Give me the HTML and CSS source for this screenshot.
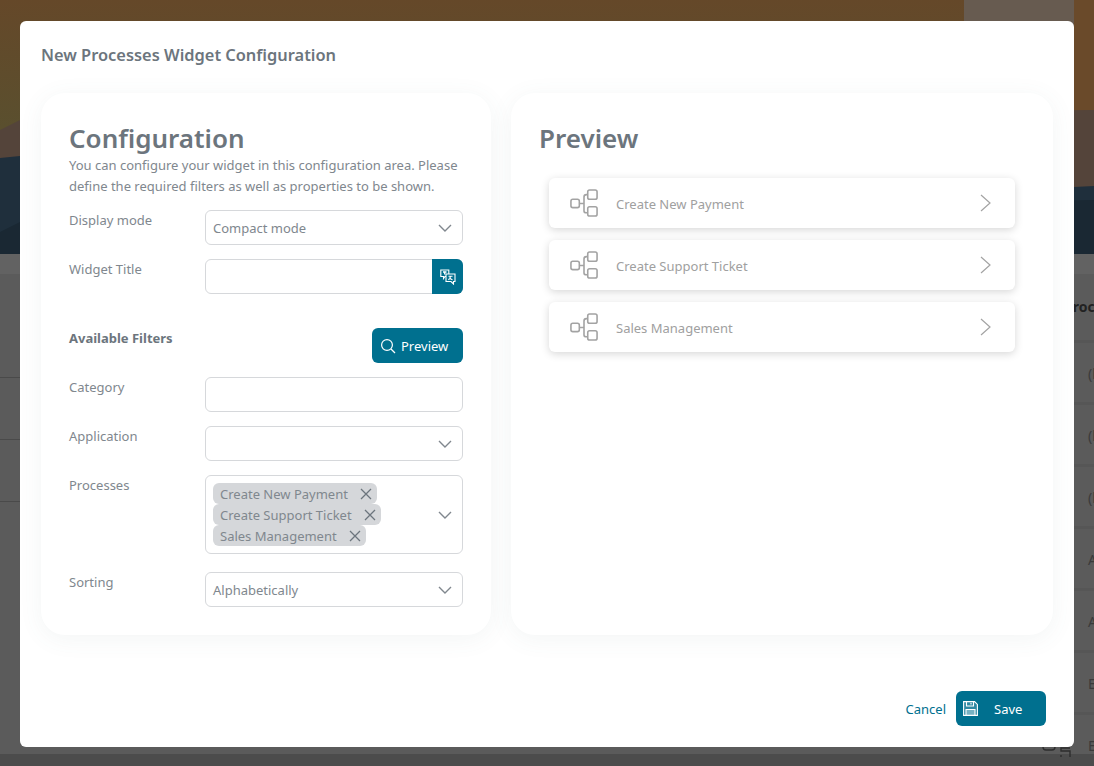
FILE: index.html
```html
<!DOCTYPE html>
<html lang="en">
<head>
    <meta charset="UTF-8">
    <title>New Processes Widget Configuration</title>
    <link rel="stylesheet" href="styles.css">
</head>

<body>
    <!-- Page behind the dialog -->
    <div class="page">
        <div class="hero">
            <svg class="hero-art" width="1094" height="254" viewBox="0 0 1094 254">
                <defs>
                    <linearGradient id="sky" x1="0" y1="0" x2="0" y2="1">
                        <stop offset="0" stop-color="#654829"/>
                        <stop offset="0.5" stop-color="#5a4f2e"/>
                        <stop offset="1" stop-color="#5a4f2e"/>
                    </linearGradient>
                </defs>
                <rect width="1094" height="254" fill="url(#sky)"/>
                <rect x="964" y="0" width="117" height="187" fill="#675b50"/>
                <rect x="1074" y="0" width="20" height="187" fill="#6a4a2a"/>
                <path d="M0 130 L20 120 L1094 110 L1094 254 L0 254 Z" fill="#54443a"/>
                <path d="M0 158 L20 156 L1074 187 L1094 186 L1094 254 L0 254 Z" fill="#1f2f3c"/>
                <path d="M0 232 L20 222 L1094 200 L1094 254 L0 254 Z" fill="#1a2833"/>
            </svg>
        </div>
        <div class="page-toolbar"></div>
        <div class="page-rows">
            <div class="page-side">
                <div class="side-row"></div>
                <div class="side-row"></div>
                <div class="side-row"></div>
            </div>
            <div class="page-column">
                <div class="page-head">Process</div>
                <div class="page-row">(l</div>
                <div class="page-row">(l</div>
                <div class="page-row">(l</div>
                <div class="page-row">A</div>
                <div class="page-row">A</div>
                <div class="page-row">E</div>
                <div class="page-row">E</div>
            </div>
        </div>
        <svg class="page-icon" width="30" height="10" viewBox="0 0 30 10" fill="none" stroke="#2e2e2e" stroke-width="1.4">
            <path d="M1 0q0 3 3 3h6q3 0 3-3"/>
            <path d="M28 1h-9v3h9v6M19 8v2"/>
        </svg>
    </div>

    <div class="modal">
        <h1 class="modal-title">New Processes Widget Configuration</h1>

        <div class="modal-body">
            <!-- Configuration card -->
            <section class="card card-config">
                <h2 class="card-title">Configuration</h2>
                <p class="card-intro">You can configure your widget in this configuration area. Please define the required filters as well as properties to be shown.</p>

                <div class="field">
                    <label class="field-label">Display mode</label>
                    <div class="control">
                        <span>Compact mode</span>
                        <svg class="chevron" viewBox="0 0 14 8"><path d="M1 1l6 6 6-6"/></svg>
                    </div>
                </div>

                <div class="field field-title">
                    <label class="field-label">Widget Title</label>
                    <div class="control control-addon">
                        <div class="addon">
                            <svg width="16" height="16" viewBox="0 0 16 16" fill="none" stroke="#fff" stroke-width="1.1">
                                <path d="M.8 1h8v6.500H5L3.500 9.500V7.500H.8z"/>
                                <path d="M3 3h3.500M4.700 3v2.500" stroke-width="1.300"/>
                                <path d="M6 5h9v7.500h-1.500v2.500L11 12.500H6z" fill="#00708f"/>
                                <path d="M8.500 7.200h4M10.500 7.200c0 2-1 3-2.200 3.600M9.500 8.500c.6 1 1.600 2 3 2.300"/>
                            </svg>
                        </div>
                    </div>
                </div>

                <div class="filters-head">
                    <h3 class="filters-title">Available Filters</h3>
                    <button class="btn btn-preview">
                        <svg width="16" height="16" viewBox="0 0 16 16" fill="none" stroke="#fff" stroke-width="1.2"><circle cx="7" cy="7" r="5.400"/><path d="M11 11l4 4"/></svg>
                        Preview
                    </button>
                </div>

                <div class="field">
                    <label class="field-label">Category</label>
                    <div class="control"></div>
                </div>

                <div class="field">
                    <label class="field-label">Application</label>
                    <div class="control">
                        <span></span>
                        <svg class="chevron" viewBox="0 0 14 8"><path d="M1 1l6 6 6-6"/></svg>
                    </div>
                </div>

                <div class="field field-processes">
                    <label class="field-label">Processes</label>
                    <div class="control control-tags">
                        <div class="tags">
                            <span class="tag">Create New Payment <svg class="tag-x" viewBox="0 0 12 12"><path d="M1 1l10 10M11 1L1 11"/></svg></span>
                            <span class="tag">Create Support Ticket <svg class="tag-x" viewBox="0 0 12 12"><path d="M1 1l10 10M11 1L1 11"/></svg></span>
                            <span class="tag">Sales Management <svg class="tag-x" viewBox="0 0 12 12"><path d="M1 1l10 10M11 1L1 11"/></svg></span>
                        </div>
                        <svg class="chevron" viewBox="0 0 14 8"><path d="M1 1l6 6 6-6"/></svg>
                    </div>
                </div>

                <div class="field">
                    <label class="field-label">Sorting</label>
                    <div class="control">
                        <span>Alphabetically</span>
                        <svg class="chevron" viewBox="0 0 14 8"><path d="M1 1l6 6 6-6"/></svg>
                    </div>
                </div>
            </section>

            <!-- Preview card -->
            <section class="card card-preview">
                <h2 class="card-title">Preview</h2>
                <div class="process-list">
                    <div class="process">
                        <svg class="process-icon" viewBox="0 0 30 30" fill="none" stroke="#a3a3a3" stroke-width="1.7">
                            <rect x="1" y="11" width="9" height="9" rx="2"/>
                            <rect x="19" y="1" width="10" height="10" rx="2"/>
                            <rect x="19" y="19" width="10" height="10" rx="2"/>
                            <path d="M10 15.500h5M19 6h-1.500q-2.500 0-2.500 2.500v15q0 2 2.500 2H19"/>
                        </svg>
                        <span class="process-name">Create New Payment</span>
                        <svg class="process-arrow" viewBox="0 0 11 18"><path d="M1 1l9 8-9 8"/></svg>
                    </div>
                    <div class="process">
                        <svg class="process-icon" viewBox="0 0 30 30" fill="none" stroke="#a3a3a3" stroke-width="1.7">
                            <rect x="1" y="11" width="9" height="9" rx="2"/>
                            <rect x="19" y="1" width="10" height="10" rx="2"/>
                            <rect x="19" y="19" width="10" height="10" rx="2"/>
                            <path d="M10 15.500h5M19 6h-1.500q-2.500 0-2.500 2.500v15q0 2 2.500 2H19"/>
                        </svg>
                        <span class="process-name">Create Support Ticket</span>
                        <svg class="process-arrow" viewBox="0 0 11 18"><path d="M1 1l9 8-9 8"/></svg>
                    </div>
                    <div class="process">
                        <svg class="process-icon" viewBox="0 0 30 30" fill="none" stroke="#a3a3a3" stroke-width="1.7">
                            <rect x="1" y="11" width="9" height="9" rx="2"/>
                            <rect x="19" y="1" width="10" height="10" rx="2"/>
                            <rect x="19" y="19" width="10" height="10" rx="2"/>
                            <path d="M10 15.500h5M19 6h-1.500q-2.500 0-2.500 2.500v15q0 2 2.500 2H19"/>
                        </svg>
                        <span class="process-name">Sales Management</span>
                        <svg class="process-arrow" viewBox="0 0 11 18"><path d="M1 1l9 8-9 8"/></svg>
                    </div>
                </div>
            </section>
        </div>

        <div class="modal-footer">
            <a class="link-cancel">Cancel</a>
            <button class="btn btn-save">
                <svg width="15" height="15" viewBox="0 0 15 15" fill="none" stroke="#fff" stroke-width="1.100">
                    <path d="M.6.6h11l2.800 2.800v11H.6z" fill="#fff" fill-opacity="0.18"/>
                    <path d="M3.500.6v4.400h7V.6M8 1.800v1.800"/>
                    <path d="M3 14.400V8.500h9v5.900" fill="#fff" fill-opacity="0.35"/>
                </svg>
                <span>Save</span>
            </button>
        </div>
    </div>
</body>
</html>
```

FILE: styles.css
```css
* {
    box-sizing: border-box;
}

body {
    margin: 0;
    width: 1094px;
    height: 766px;
    overflow: hidden;
    font-family: "Noto Sans", "Open Sans", sans-serif;
    font-size: 13px;
    color: #6c757d;
    background-color: #4f4f4f;
}

/* Dimmed page behind the dialog */
.page {
    position: relative;
    height: 766px;
    overflow: hidden;
    background: linear-gradient(to bottom, #5b5b5b 0, #5b5b5b 754px, #4c4c4c 754px);
}

.hero {
    height: 254px;
}

.hero-art {
    display: block;
}

.page-toolbar {
    height: 20px;
    background-color: #626262;
}

.page-rows {
    display: flex;
    justify-content: space-between;
}

.page-side {
    width: 20px;
    padding-top: 42px;
}

.side-row {
    height: 62px;
    border-bottom: 1px solid #4a4a4a;
}

.page-column {
    width: 30px;
    padding-top: 21px;
    overflow: hidden;
}

.page-head {
    height: 45px;
    line-height: 24px;
    font-size: 14px;
    font-weight: 700;
    color: #222;
}

.page-row {
    height: 62px;
    padding-left: 24px;
    line-height: 62px;
    font-size: 14px;
    color: #3a3a3a;
    border-top: 3px solid #565656;
}

.page-icon {
    position: absolute;
    left: 1042px;
    top: 747px;
}

/* Dialog */
.modal {
    position: absolute;
    left: 20px;
    top: 21px;
    width: 1054px;
    height: 726px;
    padding: 21px 21px 0;
    display: flex;
    flex-direction: column;
    background-color: #fff;
    border-radius: 6px;
}

.modal-title {
    margin: 0;
    height: 51px;
    font-size: 16.400px;
    line-height: 26px;
    font-weight: 600;
    color: #6c757d;
}

.modal-body {
    display: flex;
    gap: 20px;
}

.card {
    height: 542px;
    border-radius: 24px;
    background-color: #fff;
    box-shadow: 0 4px 24px rgba(90, 110, 110, 0.07);
}

.card-config {
    width: 450px;
    padding: 29px 28px 0;
}

.card-preview {
    width: 542px;
    padding: 29px 38px 0 28px;
}

.card-title {
    margin: 0;
    font-size: 26px;
    line-height: 33px;
    font-weight: 600;
    color: #6c757d;
}

.card-intro {
    margin: 0 0 13px;
    line-height: 21px;
    color: #80878e;
}

.field {
    display: flex;
    margin-bottom: 14px;
}

.field-label {
    width: 136px;
    flex-shrink: 0;
    line-height: 20px;
    color: #80878e;
}

.control {
    flex: 1;
    height: 35px;
    padding: 0 10px 0 7px;
    display: flex;
    align-items: center;
    justify-content: space-between;
    border: 1px solid #d6d8db;
    border-radius: 6px;
    color: #80878e;
}

.field-title {
    margin-bottom: 34px;
}

.control-addon {
    padding: 0;
    justify-content: flex-end;
}

.addon {
    width: 31px;
    height: 35px;
    margin: -1px;
    display: flex;
    align-items: center;
    justify-content: center;
    background-color: #00708f;
    border-radius: 0 6px 6px 0;
}

.filters-head {
    display: flex;
    justify-content: space-between;
    margin-bottom: 14px;
}

.filters-title {
    margin: 0;
    font-size: 13px;
    line-height: 20px;
    font-weight: 700;
    color: #6c757d;
}

.btn {
    display: flex;
    align-items: center;
    border: 0;
    border-radius: 6px;
    background-color: #00708f;
    color: #fff;
    font-family: inherit;
    font-size: 13px;
}

.btn-preview {
    width: 91px;
    height: 35px;
    padding: 0 8px;
    gap: 5px;
}

.control-tags {
    height: 79px;
}

.field-processes {
    margin-bottom: 18px;
}

.tags {
    display: flex;
    flex-direction: column;
    align-items: flex-start;
}

.tag {
    height: 21px;
    padding: 0 5px 0 7px;
    display: flex;
    align-items: center;
    gap: 12px;
    background-color: #d5d7da;
    border-radius: 6px;
    color: #80878e;
}

.tag-x {
    width: 12px;
    height: 12px;
    fill: none;
    stroke: #6c757d;
    stroke-width: 1.300;
}

.chevron {
    width: 14px;
    height: 8px;
    fill: none;
    stroke: #80878e;
    stroke-width: 1.400;
}

/* Preview list */
.process-list {
    margin: 23px 0 0 10px;
    display: flex;
    flex-direction: column;
    gap: 12px;
}

.process {
    height: 50px;
    padding: 0 24px 0 21px;
    display: flex;
    align-items: center;
    background-color: #fff;
    border-radius: 6px;
    box-shadow: 0 2px 8px rgba(0, 0, 0, 0.16);
}

.process-icon {
    width: 28px;
    height: 30px;
    flex-shrink: 0;
}

.process-name {
    flex: 1;
    margin-left: 18px;
    padding-top: 2px;
    color: #a0a0a0;
}

.process-arrow {
    width: 11px;
    height: 18px;
    fill: none;
    stroke: #a3a3a3;
    stroke-width: 1.200;
}

/* Footer */
.modal-footer {
    margin-top: auto;
    padding: 0 7px 21px 0;
    display: flex;
    align-items: center;
    justify-content: flex-end;
    gap: 10px;
}

.link-cancel {
    color: #00708f;
}

.btn-save {
    width: 90px;
    height: 35px;
    padding: 0 7px;
}

.btn-save span {
    margin-left: 16px;
}
```
